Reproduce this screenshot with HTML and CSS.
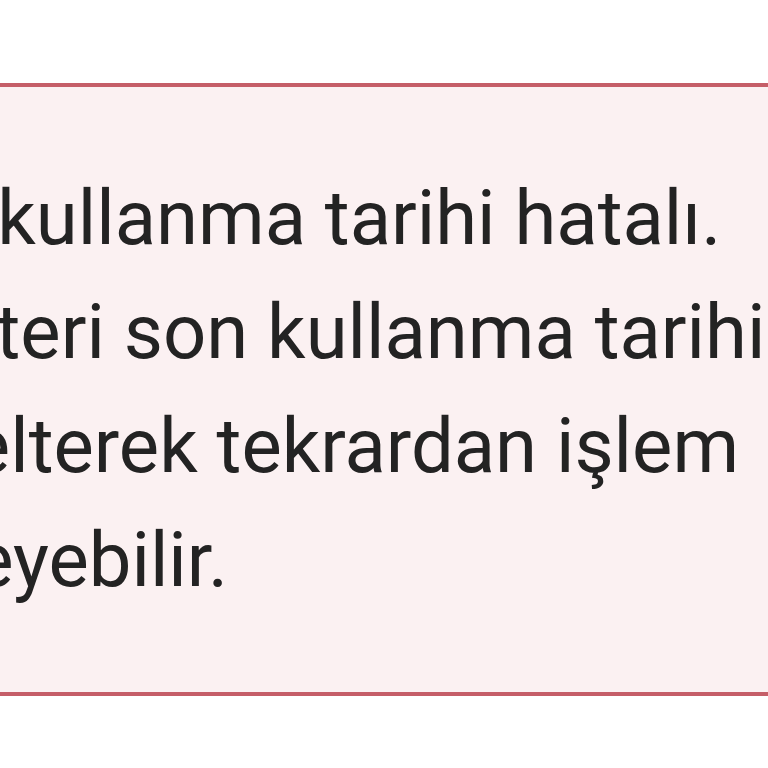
FILE: index.html
```html
<!DOCTYPE html>
<html lang="tr">
<head>
<meta charset="utf-8">
<link rel="stylesheet" href="styles.css">
</head>
<body>
<div class="page">
  <div class="alert">
    <p class="alert-text">Son kullanma tarihi hatalı. Müşteri son kullanma tarihini düzelterek tekrardan işlem deneyebilir.</p>
  </div>
</div>
</body>
</html>
```
FILE: styles.css
```css
html, body {
  margin: 0;
  padding: 0;
  background: #ffffff;
}
.page {
  width: 768px;
  height: 768px;
  overflow: hidden;
  padding-top: 83px;
  box-sizing: border-box;
}
.alert {
  background: #fbf1f2;
  border-top: 4px solid #c55e68;
  border-bottom: 4px solid #c55e68;
  padding: 74px 0 75px 0;
  overflow: hidden;
}
.alert-text {
  margin: 0 0 0 -152px;
  width: 1060px;
  font-family: Roboto, "Noto Sans", sans-serif;
  font-size: 76px;
  line-height: 114px;
  color: #232323;
}
```
